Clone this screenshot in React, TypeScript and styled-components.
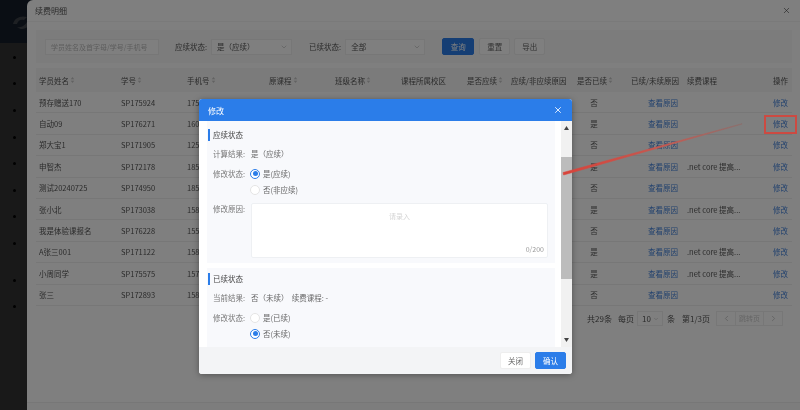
import React from "react";
import styled, { createGlobalStyle } from "styled-components";
import { ChevronDown, ChevronLeft, ChevronRight, X } from "lucide-react";

const Global = createGlobalStyle`
  html, body { margin: 0; padding: 0; width: 800px; height: 410px; overflow: hidden; background: #1a1a1a; }
  * { box-sizing: border-box; }
  body { font-family: "Noto Sans CJK SC", "Noto Sans", sans-serif; }
`;

const Screen = styled.div`
  position: relative;
  width: 800px;
  height: 410px;
  display: flex;
  overflow: hidden;
  filter: blur(0.35px);
  font-size: 7.5px;
  color: #555;
`;

const Sidebar = styled.aside`
  width: 40px;
  margin-right: -13px;
  flex: none;
  background: #333;
  display: flex;
  flex-direction: column;
`;
const LogoBar = styled.div`
  height: 43px;
  background: #141c28;
  padding: 14px 0 0 12px;
  margin-bottom: 1px;
`;
const NavGroup = styled.div<{ $gap?: number }>`
  display: flex;
  flex-direction: column;
  margin-bottom: ${(p) => p.$gap ?? 0}px;
`;
const NavDot = styled.span`
  height: 26.6px;
  display: flex;
  align-items: center;
  padding-left: 13px;
  &::before {
    content: "";
    width: 3px;
    height: 3px;
    border-radius: 50%;
    background: #000;
  }
`;

const Drawer = styled.section`
  position: relative;
  flex: 1;
  min-width: 0;
  background: #fff;
  border-radius: 6px 0 0 0;
  display: flex;
  flex-direction: column;
`;
const DrawerHead = styled.header`
  height: 22px;
  flex: none;
  display: flex;
  align-items: center;
  justify-content: space-between;
  padding: 0 9px 0 8px;
  font-size: 8px;
  color: #555;
  border-bottom: 1px solid #f4f4f4;
`;
const DrawerBody = styled.div`
  flex: 1;
  padding: 8px 8px 0 9px;
  min-height: 0;
`;
const DrawerFoot = styled.footer`
  height: 8px;
  flex: none;
  border-top: 1px solid #eee;
  background: #fafafa;
`;

const FilterBar = styled.div`
  height: 33px;
  background: #f9f9f9;
  display: flex;
  align-items: center;
  padding: 0 0 0 9px;
  margin-bottom: 5px;
`;
const SearchInput = styled.div`
  width: 114px;
  height: 16px;
  background: #fff;
  border: 1px solid #eee;
  color: #bbb;
  font-size: 7px;
  line-height: 14px;
  padding-left: 5px;
  white-space: nowrap;
  margin-right: 16px;
`;
const FilterLabel = styled.span`
  margin-right: 4px;
  white-space: nowrap;
`;
const Dropdown = styled.div<{ $w: number }>`
  width: ${(p) => p.$w}px;
  height: 16px;
  background: #fff;
  border: 1px solid #eee;
  display: flex;
  align-items: center;
  justify-content: space-between;
  padding: 0 3px 0 5px;
  margin-right: 17px;
  color: #555;
  svg { color: #bbb; }
`;
const Btn = styled.button<{ $primary?: boolean }>`
  width: ${(p) => (p.$primary ? 32 : 31)}px;
  height: 17px;
  margin-right: ${(p) => (p.$primary ? 5 : 4)}px;
  border-radius: 2px;
  border: 1px solid ${(p) => (p.$primary ? "#2b7de9" : "#eee")};
  background: ${(p) => (p.$primary ? "#2b7de9" : "#fff")};
  color: ${(p) => (p.$primary ? "#fff" : "#666")};
  font: inherit;
  padding: 0;
`;

const COLS = "82px 66px 82px 66px 66px 66px 44px 66px 54px 56px 86px 1fr";
const HeadRow = styled.div`
  display: grid;
  grid-template-columns: ${COLS};
  height: 24px;
  background: #f6f6f6;
  align-items: center;
  padding-left: 3px;
`;
const HeadCell = styled.div`
  display: flex;
  align-items: center;
  gap: 1px;
  white-space: nowrap;
  color: #555;
`;
const Row = styled.div`
  display: grid;
  grid-template-columns: ${COLS};
  height: 21.4px;
  align-items: center;
  border-bottom: 1px solid #eee;
  padding-left: 3px;
`;
const Cell = styled.div<{ $align?: string; $pr?: number }>`
  white-space: nowrap;
  overflow: hidden;
  text-align: ${(p) => p.$align ?? "left"};
  padding-right: ${(p) => p.$pr ?? 0}px;
`;
const LinkText = styled.span`
  color: #4684dc;
`;

const Pager = styled.div`
  display: flex;
  align-items: center;
  justify-content: flex-end;
  height: 26px;
  padding-right: 9px;
  font-size: 8px;
`;
const PagerText = styled.span<{ $mr: number }>`
  margin-right: ${(p) => p.$mr}px;
  white-space: nowrap;
`;
const SizeBox = styled.div`
  width: 26px;
  height: 15px;
  border: 1px solid #eee;
  display: flex;
  align-items: center;
  justify-content: space-between;
  padding: 0 3px 0 4px;
  margin-right: 4px;
  svg { color: #aaa; }
`;
const PagerBtn = styled.div`
  width: 20px;
  height: 15px;
  border: 1px solid #eee;
  display: flex;
  align-items: center;
  justify-content: center;
  color: #bbb;
`;
const JumpBox = styled.div`
  width: 27px;
  height: 15px;
  border-top: 1px solid #eee;
  border-bottom: 1px solid #eee;
  color: #ccc;
  font-size: 7px;
  line-height: 13px;
  text-align: center;
  white-space: nowrap;
`;

const Mask = styled.div`
  position: absolute;
  inset: 0;
  background: rgba(0, 0, 0, 0.5);
`;

const Modal = styled.div`
  position: absolute;
  left: 199px;
  top: 99px;
  width: 373px;
  height: 275px;
  display: flex;
  flex-direction: column;
  background: #fff;
  border-radius: 3px;
  overflow: hidden;
  box-shadow: 0 1px 6px rgba(0, 0, 0, 0.35);
`;
const ModalHead = styled.div`
  height: 22px;
  flex: none;
  background: #2b7de9;
  color: #fff;
  font-size: 8px;
  display: flex;
  align-items: center;
  justify-content: space-between;
  padding: 0 9px;
`;
const ModalMiddle = styled.div`
  flex: 1;
  min-height: 0;
  display: flex;
`;
const ModalScroll = styled.div`
  flex: 1;
  min-width: 0;
  padding: 0 6px 0 8px;
  display: flex;
  flex-direction: column;
  gap: 5px;
  overflow: hidden;
`;
const Section = styled.div<{ $h: number; $pt: number }>`
  height: ${(p) => p.$h}px;
  flex: none;
  background: #f8f9fc;
  padding: ${(p) => p.$pt}px 6px 0 1px;
`;
const SectionTitle = styled.div`
  height: 12px;
  line-height: 12px;
  border-left: 2px solid #2b7de9;
  padding-left: 3px;
  color: #444;
  margin-bottom: 6.5px;
`;
const FormRow = styled.div<{ $h: number }>`
  display: flex;
  min-height: ${(p) => p.$h}px;
  padding-left: 5px;
  color: #777;
`;
const FormLabel = styled.div`
  width: 38px;
  flex: none;
  white-space: nowrap;
`;
const FormValue = styled.div`
  color: #666;
  white-space: pre;
`;
const RadioGroup = styled.div`
  display: flex;
  flex-direction: column;
  gap: 4px;
`;
const RadioItem = styled.div`
  display: flex;
  align-items: center;
  gap: 3px;
  height: 12px;
  margin-left: -1px;
  color: #666;
`;
const RadioDot = styled.span<{ $on?: boolean }>`
  width: 10px;
  height: 10px;
  border-radius: 50%;
  background: #fff;
  border: 1px solid ${(p) => (p.$on ? "#2b7de9" : "#e4e4e4")};
  display: flex;
  align-items: center;
  justify-content: center;
  &::after {
    content: "";
    width: 5px;
    height: 5px;
    border-radius: 50%;
    background: ${(p) => (p.$on ? "#2b7de9" : "transparent")};
  }
`;
const TextArea = styled.div`
  position: relative;
  width: 297px;
  height: 55px;
  background: #fff;
  border: 1px solid #eef0f3;
  border-radius: 2px;
  text-align: center;
  padding-top: 7px;
  color: #d4d4d4;
  font-size: 7px;
`;
const Counter = styled.span`
  position: absolute;
  right: 3px;
  bottom: 3px;
  color: #999;
`;
const Track = styled.div`
  width: 11px;
  flex: none;
  background: #f1f1f1;
  display: flex;
  flex-direction: column;
  align-items: center;
  color: #444;
`;
const TrackEnd = styled.div`
  height: 14px;
  flex: none;
  display: flex;
  align-items: center;
  justify-content: center;
`;
const TrackGap = styled.div<{ $h: number }>`
  height: ${(p) => p.$h}px;
  flex: none;
`;
const Thumb = styled.div`
  width: 100%;
  height: 122px;
  flex: none;
  background: #bcbcbc;
`;
const ModalFoot = styled.div`
  height: 27px;
  flex: none;
  background: #f3f4f6;
  display: flex;
  align-items: center;
  justify-content: flex-end;
  gap: 4px;
  padding-right: 6px;
`;
const FootBtn = styled.button<{ $primary?: boolean }>`
  width: 31px;
  height: 17px;
  border-radius: 2px;
  border: 1px solid ${(p) => (p.$primary ? "#2b7de9" : "#eee")};
  background: ${(p) => (p.$primary ? "#2b7de9" : "#fff")};
  color: ${(p) => (p.$primary ? "#fff" : "#666")};
  font: inherit;
  padding: 0;
`;

const RedBox = styled.div`
  position: absolute;
  left: 764px;
  top: 115px;
  width: 33px;
  height: 19px;
  border: 2px solid #cc4a42;
`;
const ArrowLayer = styled.svg`
  position: absolute;
  left: 0;
  top: 0;
  pointer-events: none;
`;

const SortIcon = () => (
  <svg width="5" height="8" viewBox="0 0 5 8">
    <path d="M2.5 1 L4.2 3.2 H0.8 Z M2.5 7 L0.8 4.8 H4.2 Z" fill="#c4c4c4" />
  </svg>
);

const Logo = () => (
  <svg width="24" height="18" viewBox="0 0 24 18">
    <path d="M1 10 C2 4 9 1 15 3 L12 6 C8 5 6 7 5 10 Z" fill="#3c4047" />
    <path d="M5 13 C10 14 13 11 15 8 L20 6 C18 13 11 18 5 13 Z" fill="#3c4047" />
  </svg>
);

const headers: [string, boolean][] = [
  ["学员姓名", true],
  ["学号", true],
  ["手机号", true],
  ["原课程", true],
  ["班级名称", true],
  ["课程所属校区", false],
  ["是否应续", true],
  ["应续/非应续原因", false],
  ["是否已续", true],
  ["已续/未续原因", false],
  ["续费课程", false],
  ["操作", false],
];

const rows = [
  ["预存赠送170", "SP175924", "175", "否", ""],
  ["自动09", "SP176271", "160", "是", ""],
  ["郑大宝1", "SP171905", "125", "否", ""],
  ["申智杰", "SP172178", "185", "是", ".net core 提高..."],
  ["测试20240725", "SP174950", "185", "否", ""],
  ["张小北", "SP173038", "158", "是", ".net core 提高..."],
  ["我是体验课报名", "SP176228", "155", "否", ""],
  ["A张三001", "SP171122", "158", "是", ".net core 提高..."],
  ["小周同学", "SP175575", "157", "是", ".net core 提高..."],
  ["张三", "SP172893", "158", "否", ""],
];

export default function App() {
  return (
    <>
      <Global />
      <Screen>
        <Sidebar>
          <LogoBar>
            <Logo />
          </LogoBar>
          <NavGroup $gap={10}>
            {Array.from({ length: 8 }).map((_, i) => (
              <NavDot key={i} />
            ))}
          </NavGroup>
          <NavGroup>
            {Array.from({ length: 2 }).map((_, i) => (
              <NavDot key={i} />
            ))}
          </NavGroup>
        </Sidebar>

        <Drawer>
          <DrawerHead>
            <span>续费明细</span>
            <X size={9} strokeWidth={1.5} color="#333" />
          </DrawerHead>
          <DrawerBody>
            <FilterBar>
              <SearchInput>学员姓名及首字母/学号/手机号</SearchInput>
              <FilterLabel>应续状态:</FilterLabel>
              <Dropdown $w={81}>
                <span>是（应续）</span>
                <ChevronDown size={8} />
              </Dropdown>
              <FilterLabel>已续状态:</FilterLabel>
              <Dropdown $w={80}>
                <span>全部</span>
                <ChevronDown size={8} />
              </Dropdown>
              <Btn $primary>查询</Btn>
              <Btn>重置</Btn>
              <Btn>导出</Btn>
            </FilterBar>

            <HeadRow>
              {headers.map(([label, sort]) => (
                <HeadCell key={label}>
                  {label}
                  {sort && <SortIcon />}
                </HeadCell>
              ))}
            </HeadRow>
            {rows.map((r) => (
              <Row key={r[1]}>
                <Cell>{r[0]}</Cell>
                <Cell>{r[1]}</Cell>
                <Cell>{r[2]}</Cell>
                <Cell />
                <Cell />
                <Cell />
                <Cell />
                <Cell />
                <Cell $align="center" $pr={20}>{r[3]}</Cell>
                <Cell $align="right" $pr={9}>
                  <LinkText>查看原因</LinkText>
                </Cell>
                <Cell>{r[4]}</Cell>
                <Cell>
                  <LinkText>修改</LinkText>
                </Cell>
              </Row>
            ))}
            <Pager>
              <PagerText $mr={6}>共29条</PagerText>
              <PagerText $mr={3}>每页</PagerText>
              <SizeBox>
                <span>10</span>
                <ChevronDown size={6} />
              </SizeBox>
              <PagerText $mr={7}>条</PagerText>
              <PagerText $mr={6}>第1/3页</PagerText>
              <PagerBtn>
                <ChevronLeft size={9} />
              </PagerBtn>
              <JumpBox>跳转页</JumpBox>
              <PagerBtn>
                <ChevronRight size={9} />
              </PagerBtn>
            </Pager>
          </DrawerBody>
          <DrawerFoot />
        </Drawer>

        <Mask />

        <Modal>
          <ModalHead>
            <span>修改</span>
            <X size={10} strokeWidth={2} />
          </ModalHead>
          <ModalMiddle>
            <ModalScroll>
              <Section $h={142} $pt={8}>
                <SectionTitle>应续状态</SectionTitle>
                <FormRow $h={20}>
                  <FormLabel>计算结果:</FormLabel>
                  <FormValue>是（应续）</FormValue>
                </FormRow>
                <FormRow $h={35}>
                  <FormLabel>修改状态:</FormLabel>
                  <RadioGroup>
                    <RadioItem>
                      <RadioDot $on />
                      是(应续)
                    </RadioItem>
                    <RadioItem>
                      <RadioDot />
                      否(非应续)
                    </RadioItem>
                  </RadioGroup>
                </FormRow>
                <FormRow $h={55}>
                  <FormLabel>修改原因:</FormLabel>
                  <TextArea>
                    请录入
                    <Counter>0/200</Counter>
                  </TextArea>
                </FormRow>
              </Section>
              <Section $h={84} $pt={5}>
                <SectionTitle>已续状态</SectionTitle>
                <FormRow $h={20}>
                  <FormLabel>当前结果:</FormLabel>
                  <FormValue>否（未续）  续费课程: -</FormValue>
                </FormRow>
                <FormRow $h={29}>
                  <FormLabel>修改状态:</FormLabel>
                  <RadioGroup>
                    <RadioItem>
                      <RadioDot />
                      是(已续)
                    </RadioItem>
                    <RadioItem>
                      <RadioDot $on />
                      否(未续)
                    </RadioItem>
                  </RadioGroup>
                </FormRow>
              </Section>
            </ModalScroll>
            <Track>
              <TrackEnd>
                <svg width="5" height="4" viewBox="0 0 5 4">
                  <path d="M2.5 0 L5 4 H0 Z" fill="currentColor" />
                </svg>
              </TrackEnd>
              <TrackGap $h={22} />
              <Thumb />
              <TrackGap $h={54} />
              <TrackEnd>
                <svg width="5" height="4" viewBox="0 0 5 4">
                  <path d="M2.5 4 L5 0 H0 Z" fill="currentColor" />
                </svg>
              </TrackEnd>
            </Track>
          </ModalMiddle>
          <ModalFoot>
            <FootBtn>关闭</FootBtn>
            <FootBtn $primary>确认</FootBtn>
          </ModalFoot>
        </Modal>

        <RedBox />
        <ArrowLayer width="800" height="410" viewBox="0 0 800 410">
          <defs>
            <linearGradient id="arrowFade" x1="563" y1="174" x2="742" y2="124" gradientUnits="userSpaceOnUse">
              <stop offset="0" stopColor="#d9433a" />
              <stop offset="0.6" stopColor="#c25a52" />
              <stop offset="1" stopColor="#8a6f6d" />
            </linearGradient>
          </defs>
          <path d="M563 172.5 L742 123.6 L742 124.2 L563.6 175 Z" fill="url(#arrowFade)" stroke="url(#arrowFade)" strokeWidth="0.5" />
        </ArrowLayer>
      </Screen>
    </>
  );
}
